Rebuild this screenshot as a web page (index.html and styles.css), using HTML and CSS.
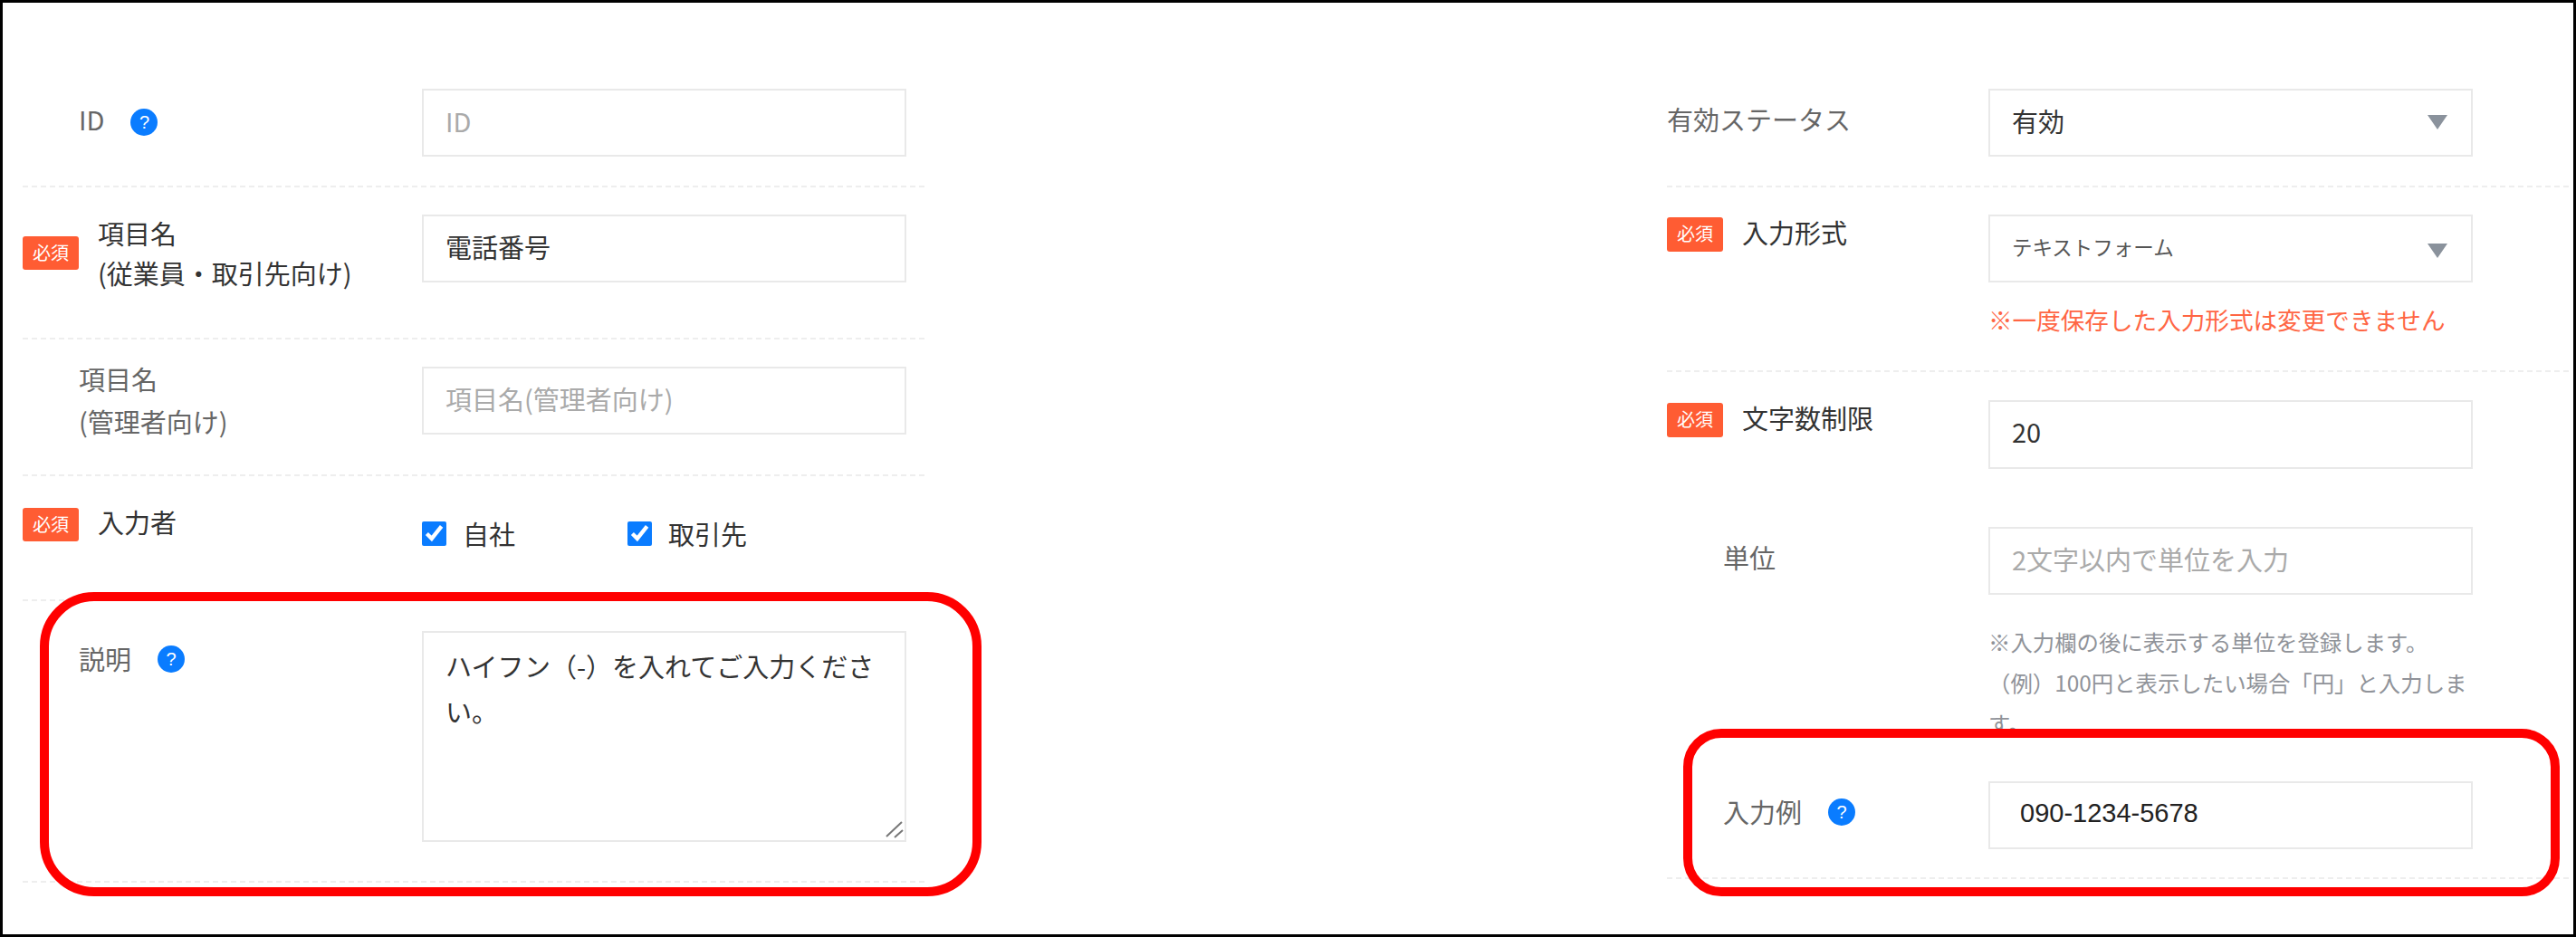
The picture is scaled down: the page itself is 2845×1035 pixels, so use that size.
FILE: index.html
```html
<!DOCTYPE html>
<html lang="ja">
<head>
    <meta charset="UTF-8">
    <title>項目設定</title>
    <link rel="stylesheet" href="styles.css">
</head>
<body>
    <div class="page">
        <div class="form">
            <div class="col">
                <div class="row row-id">
                    <div class="label label-plain label-mid">ID<span class="help">?</span></div>
                    <div class="field"><input class="box" type="text" placeholder="ID"></div>
                </div>
                <div class="row row-name">
                    <div class="label label-req label-two"><span class="badge badge-mid">必須</span><span>項目名<br>(従業員・取引先向け)</span></div>
                    <div class="field"><input class="box" type="text" value="電話番号"></div>
                </div>
                <div class="row row-admin">
                    <div class="label label-plain label-admin">項目名<br>(管理者向け)</div>
                    <div class="field"><input class="box" type="text" placeholder="項目名(管理者向け)"></div>
                </div>
                <div class="row row-who">
                    <div class="label label-req"><span class="badge">必須</span><span>入力者</span></div>
                    <div class="field checks">
                        <label class="check"><input type="checkbox" checked>自社</label>
                        <label class="check"><input type="checkbox" checked>取引先</label>
                    </div>
                </div>
                <div class="row row-desc">
                    <div class="label label-plain label-mid">説明<span class="help help-up">?</span></div>
                    <div class="field area-wrap">
                        <textarea class="box area">ハイフン（-）を入れてご入力ください。</textarea>
                        <svg class="grip" width="24" height="24" viewBox="0 0 24 24"><path d="M19 2 2 18M20 11l-9 8"/></svg>
                    </div>
                </div>
            </div>
            <div class="col">
                <div class="row row-id">
                    <div class="label label-wide label-mid">有効ステータス</div>
                    <div class="field field-wide">
                        <div class="pick"><select class="box"><option>有効</option></select></div>
                    </div>
                </div>
                <div class="row row-type">
                    <div class="label label-req label-wide label-top"><span class="badge">必須</span><span>入力形式</span></div>
                    <div class="field field-wide">
                        <div class="pick"><select class="box box-small"><option>テキストフォーム</option></select></div>
                        <p class="warn">※一度保存した入力形式は変更できません</p>
                    </div>
                </div>
                <div class="row row-limit">
                    <div class="label label-req label-wide label-top"><span class="badge">必須</span><span>文字数制限</span></div>
                    <div class="field field-wide"><input class="box box-num" type="text" value="20"></div>
                </div>
                <div class="row row-unit">
                    <div class="label label-plain label-wide label-mid">単位</div>
                    <div class="field field-wide">
                        <input class="box" type="text" placeholder="2文字以内で単位を入力">
                        <p class="note">※入力欄の後に表示する単位を登録します。<br>（例）100円と表示したい場合「円」と入力します。</p>
                    </div>
                </div>
                <div class="row row-sample">
                    <div class="label label-plain label-wide label-mid">入力例<span class="help help-up">?</span></div>
                    <div class="field field-wide"><input class="box box-sample" type="text" value="090-1234-5678"></div>
                </div>
            </div>
        </div>
        <!-- annotation frames drawn over the form -->
        <div class="frame frame-desc"></div>
        <div class="frame frame-sample"></div>
    </div>
</body>
</html>
```

FILE: styles.css
```css
* {
    margin: 0;
    padding: 0;
    box-sizing: border-box;
}
body {
    background: #fff;
    font-family: "Noto Sans CJK JP", "Liberation Sans", sans-serif;
    font-size: 29px;
    color: #333;
    text-spacing-trim: space-all;
}
.page {
    position: relative;
    height: 1035px;
    border: 3px solid #000;
    overflow: hidden;
}
.form {
    display: flex;
    justify-content: space-between;
    padding: 95px 5px 0 22px;
}
.col {
    width: 996px;
}
.row {
    display: flex;
    border-bottom: 2px dashed #eee;
}
.row-id { padding-bottom: 32px; }
.row-name { padding: 30px 0 50px; }
.row-admin { padding: 30px 0 35px; }
.row-who { padding: 28px 0 50px; }
.row-desc { padding: 33px 0 43px; }
.row-type { padding: 30px 0 34px; }
.row-limit { padding: 31px 0 32px; border-bottom: 0; }
.row-unit { padding: 32px 0 42px; border-bottom: 0; }
.row-sample { padding-bottom: 31px; }

.label {
    display: flex;
    align-items: flex-start;
    width: 441px;
    height: fit-content;
    line-height: 45px;
}
.label-wide { width: 355px; }
.label-plain {
    display: block;
    padding-left: 62px;
    color: #666;
}
.label-req { gap: 21px; }
.label-mid { margin-top: 11px; }
.row-desc .label-mid { margin-top: 8px; }
.label-top { margin-top: -3px; }
.label-two {
    align-items: center;
    margin-top: -2px;
    line-height: 44px;
}
.label-admin {
    margin-top: -10px;
    line-height: 47px;
}
.row-id .label-wide { color: #666; }

.badge {
    flex: none;
    width: 62px;
    height: 37px;
    margin-top: 7px;
    border-radius: 3px;
    background: #ff5c33;
    color: #fff;
    font-size: 20px;
    line-height: 36px;
    text-align: center;
}
.label-top .badge {
    height: 38px;
    margin-top: 6px;
}
.badge-mid { margin-top: 0; }
.help {
    display: inline-block;
    width: 30px;
    height: 30px;
    margin-left: 29px;
    border-radius: 50%;
    background: #0a7cff;
    color: #fff;
    font-family: "Liberation Sans", sans-serif;
    font-size: 20px;
    line-height: 30px;
    text-align: center;
    vertical-align: 2px;
}
.help-up { vertical-align: 5px; }

.field { width: 535px; }
.box {
    display: block;
    width: 100%;
    height: 75px;
    padding: 0 24px 5px;
    border: 2px solid #e9e9e9;
    border-radius: 0;
    outline: none;
    background: #fff;
    color: #333;
    font-family: inherit;
    font-size: 29px;
}
.box::placeholder { color: #aaa; }
.box-small {
    font-size: 22.5px;
    color: #555;
}
.box-num { padding-bottom: 8px; height: 76px; }
.box-sample {
    padding-left: 33px;
    color: #222;
    font-family: "Liberation Sans", sans-serif;
}
.area-wrap { position: relative; }
.area {
    height: 233px;
    padding: 11px 24px;
    line-height: 50px;
    resize: none;
}
.grip {
    position: absolute;
    right: 0;
    bottom: 0;
    fill: none;
    stroke: #777;
    stroke-width: 2;
}
.pick { position: relative; }
.pick select { appearance: none; }
.pick::after {
    content: "";
    position: absolute;
    top: 29px;
    right: 28px;
    border-top: 16px solid #8a929c;
    border-left: 11px solid transparent;
    border-right: 11px solid transparent;
}
.row-type .pick::after { top: 32px; }
.checks {
    display: flex;
    margin-top: 13px;
    line-height: 45px;
}
.check {
    display: flex;
    align-items: center;
    width: 227px;
    gap: 18px;
    color: #333;
}
.check input {
    width: 27px;
    height: 27px;
    accent-color: #0a7cff;
}
.warn {
    margin-top: 18px;
    color: #ff6644;
    font-size: 26.6px;
    line-height: 45px;
    white-space: nowrap;
}
.note {
    margin-top: 29px;
    color: #909399;
    font-size: 24.4px;
    line-height: 45px;
}

.frame {
    position: absolute;
    border: 10px solid #f00;
}
.frame-desc {
    left: 41px;
    top: 651px;
    width: 1040px;
    height: 336px;
    border-radius: 60px;
}
.frame-sample {
    left: 1856px;
    top: 802px;
    width: 968px;
    height: 185px;
    border-radius: 42px;
}
```
